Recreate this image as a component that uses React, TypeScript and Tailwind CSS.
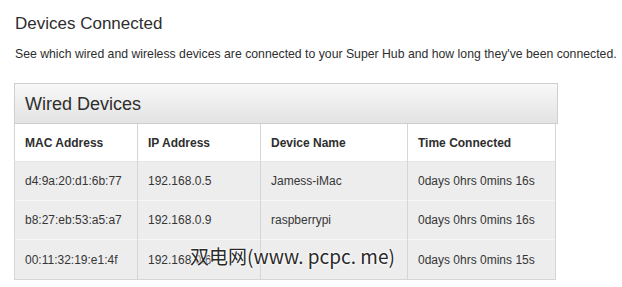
import React from "react";

const rows = [
  ["d4:9a:20:d1:6b:77", "192.168.0.5", "Jamess-iMac", "0days 0hrs 0mins 16s"],
  ["b8:27:eb:53:a5:a7", "192.168.0.9", "raspberrypi", "0days 0hrs 0mins 16s"],
  ["00:11:32:19:e1:4f", "192.168.0.6", "", "0days 0hrs 0mins 15s"],
];

const headers = ["MAC Address", "IP Address", "Device Name", "Time Connected"];

export default function App() {
  return (
    <div className="relative w-[622px] h-[287px] overflow-hidden bg-white font-['Liberation_Sans',Arial,sans-serif] text-[#333]">
      <div className="pl-[15px] pt-[15px]">
        <h1 className="text-[17px] leading-[18px] text-[#2e2e2e]">Devices Connected</h1>
        <p className="mt-[15px] text-[12.25px] leading-[12px] text-[#2e2e2e] whitespace-nowrap">
          See which wired and wireless devices are connected to your Super Hub and how long they've been connected.
        </p>
        <div className="mt-[23px] -ml-px w-[544px]">
          <div className="h-[41px] border border-[#cfcfcf] bg-linear-to-b from-[#f8f8f8] to-[#e3e3e3] pl-[10px] flex items-center">
            <span className="text-[18px] leading-[19px] text-[#2e2e2e] pt-[1px]">Wired Devices</span>
          </div>
          <div className="w-[542px] border-x border-b border-[#d6d6d6] grid grid-cols-[122px_122px_146px_147px] gap-x-px bg-[#d6d6d6]">
            {headers.map((h) => (
              <div
                key={h}
                className="h-[38px] bg-white flex items-center pl-[10px] text-[12px] font-bold text-[#2e2e2e] border-b border-[#e6e6e6]"
              >
                {h}
              </div>
            ))}
            {rows.map((r, i) =>
              r.map((c, j) => (
                <div
                  key={`${i}-${j}`}
                  className={`h-[39px] bg-[#ededed] flex items-center pl-[10px] text-[12px] text-[#363636] ${
                    i < rows.length - 1 ? "border-b border-[#f7f7f7]" : ""
                  }`}
                >
                  {c}
                </div>
              ))
            )}
          </div>
        </div>
      </div>
      <div className="absolute left-[190px] top-[244px] text-[19px] leading-[24px] text-[#2a2a2a] whitespace-nowrap font-['Noto_Sans_CJK_SC','Liberation_Sans',sans-serif] [text-shadow:0_0_2px_#fff,0_0_2px_#fff,0_0_3px_#fff]">
        双电网(www. pcpc. me)
      </div>
    </div>
  );
}
